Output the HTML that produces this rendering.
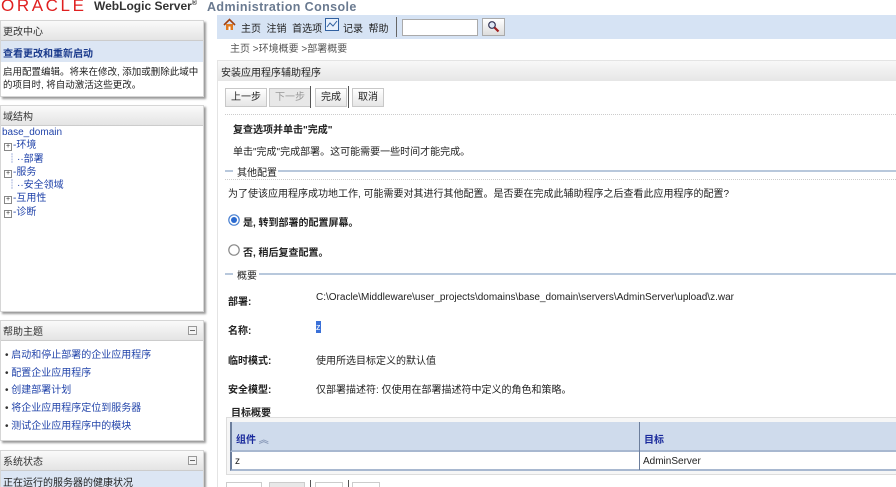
<!DOCTYPE html>
<html><head><meta charset="utf-8"><style>
*{margin:0;padding:0;box-sizing:border-box}
html,body{width:896px;height:487px;overflow:hidden}
body{background:#fff;font-family:"Liberation Sans","Noto Sans CJK SC",sans-serif;font-size:10px;color:#222;position:relative}
.a{position:absolute;white-space:nowrap}
.panel{position:absolute;left:0;width:204px;background:#fff;border:1px solid #d6d6d6;box-shadow:2px 2px 2px #999;overflow:hidden}
.ph{height:20px;background:linear-gradient(#fafafa,#e4e4e4);border-bottom:1px solid #ccc;padding:2px 2px;font-size:10px;color:#333;position:relative}
.mini{position:absolute;right:6px;top:5px;width:9px;height:9px;border:1px solid #999;background:#f4f4f4}
.mini:after{content:"";position:absolute;left:1px;right:1px;top:3px;height:1px;background:#666}
.tree div{height:13.3px;line-height:13px;color:#2244aa}
.plus{display:inline-block;width:8px;height:8px;border:1px solid #888;font-size:7px;line-height:6px;text-align:center;color:#333;margin-right:1px;vertical-align:0}
.btn{position:absolute;top:88px;height:19px;border:1px solid #c8c8c8;background:linear-gradient(#fff,#e6e6e6);font-size:10px;line-height:17px;padding:0 5px;color:#222}
.sep{position:absolute;top:86px;width:1px;height:22px;background:#555}
.hr{position:absolute;height:2px;background:#b8c8dc}
.dot{position:absolute;height:1px;border-top:1px dotted #ccc}
</style></head><body>
<div class="a" style="left:1px;top:-4px;font-size:17px;color:#e02020;letter-spacing:2.6px">ORACLE</div>
<div class="a" style="left:94px;top:-1px;font-size:12px;font-weight:bold;color:#333">WebLogic Server<sup style="font-size:7px">®</sup></div>
<div class="a" style="left:207px;top:0px;font-size:12.5px;color:#6a7a90;font-weight:bold;letter-spacing:.4px">Administration Console</div>

<div class="panel" style="top:20px;height:77px">
 <div class="ph">更改中心</div>
 <div style="background:#dce6f4;height:21px;padding:4px 2px;color:#1a3a8c;font-weight:bold">查看更改和重新启动</div>
 <div style="padding:4px 2px;line-height:13px;font-size:9.5px">启用配置编辑。将来在修改, 添加或删除此域中<br>的项目时, 将自动激活这些更改。</div>
</div>
<div class="panel" style="top:105px;height:207px">
 <div class="ph">域结构</div>
 <div class="tree" style="padding:0 0 0 1px">
  <div>base_domain</div>
  <div style="padding-left:2px"><span class="plus">+</span>-环境</div>
  <div style="padding-left:5px">┊··部署</div>
  <div style="padding-left:2px"><span class="plus">+</span>-服务</div>
  <div style="padding-left:5px">┊··安全领域</div>
  <div style="padding-left:2px"><span class="plus">+</span>-互用性</div>
  <div style="padding-left:2px"><span class="plus">+</span>-诊断</div>
 </div>
</div>
<div class="panel" style="top:320px;height:121px">
 <div class="ph">帮助主题<span class="mini"></span></div>
 <div style="padding:6px 0 0 4px;line-height:17.7px;color:#2244aa">
  <div><span style="color:#333">•</span> 启动和停止部署的企业应用程序</div>
  <div><span style="color:#333">•</span> 配置企业应用程序</div>
  <div><span style="color:#333">•</span> 创建部署计划</div>
  <div><span style="color:#333">•</span> 将企业应用程序定位到服务器</div>
  <div><span style="color:#333">•</span> 测试企业应用程序中的模块</div>
 </div>
</div>
<div class="panel" style="top:450px;height:45px">
 <div class="ph">系统状态<span class="mini"></span></div>
 <div style="background:#dce6f4;height:20px;padding:3px 2px;color:#222">正在运行的服务器的健康状况</div>
</div>

<div class="a" style="left:217px;top:15px;width:679px;height:24px;background:#d6e3f4"></div>
<svg class="a" style="left:223px;top:18px" width="13" height="13" viewBox="0 0 13 13"><path d="M1 7L6.5 1.5 12 7" fill="none" stroke="#a04010" stroke-width="1.6"/><rect x="3" y="6" width="7" height="6" fill="#e07a20"/><rect x="5.5" y="8.5" width="2" height="3.5" fill="#fff"/></svg>
<div class="a" style="left:241px;top:20px">主页&nbsp;&nbsp;注销&nbsp;&nbsp;首选项</div>
<svg class="a" style="left:325px;top:18px" width="14" height="13"><rect x=".5" y=".5" width="13" height="12" fill="#e8f0fb" stroke="#3060a0"/><path d="M2 9l3-4 3 3 4-5" fill="none" stroke="#3060a0"/></svg>
<div class="a" style="left:343px;top:20px">记录&nbsp;&nbsp;帮助</div>
<div class="a" style="left:396px;top:17px;width:1px;height:20px;background:#666"></div>
<div class="a" style="left:402px;top:19px;width:76px;height:17px;background:#fff;border:1px solid #aaa"></div>
<div class="a" style="left:482px;top:18px;width:23px;height:18px;border:1px solid #aaa;background:linear-gradient(#fff,#ddd)"></div>
<svg class="a" style="left:487px;top:20px" width="13" height="13"><circle cx="5" cy="5" r="3.3" fill="#dfe8f5" stroke="#335" stroke-width="1.2"/><path d="M7.5 7.5L11.5 11.5" stroke="#a02020" stroke-width="2.2"/></svg>
<div class="a" style="left:230px;top:40px;color:#555">主页 &gt;环境概要 &gt;部署概要</div>

<div class="a" style="left:217px;top:60px;width:679px;height:427px;border-left:1px solid #e4e4e4;border-top:1px solid #e4e4e4"></div>
<div class="a" style="left:218px;top:61px;width:678px;height:20px;background:linear-gradient(#f8f8f8,#e6e6e6);padding:3px 3px;color:#222">安装应用程序辅助程序</div>
<div class="btn" style="left:225px">上一步</div>
<div class="btn" style="left:269px;color:#999;background:#e8e8e8">下一步</div>
<div class="sep" style="left:310px"></div>
<div class="btn" style="left:315px">完成</div>
<div class="sep" style="left:348px"></div>
<div class="btn" style="left:352px">取消</div>
<div class="dot" style="left:225px;top:114px;width:671px"></div>
<div class="a" style="left:233px;top:121px;font-weight:bold">复查选项并单击"完成"</div>
<div class="a" style="left:233px;top:143px">单击"完成"完成部署。这可能需要一些时间才能完成。</div>
<div class="hr" style="left:225px;top:170px;width:8px"></div>
<div class="a" style="left:237px;top:164px">其他配置</div>
<div class="hr" style="left:278px;top:170px;width:618px"></div>
<div class="dot" style="left:225px;top:179px;width:671px"></div>
<div class="a" style="left:228px;top:185px">为了使该应用程序成功地工作, 可能需要对其进行其他配置。是否要在完成此辅助程序之后查看此应用程序的配置?</div>
<svg class="a" style="left:228px;top:214px" width="12" height="12"><circle cx="6" cy="6" r="5.2" fill="#fff" stroke="#4a80d0" stroke-width="1.2"/><circle cx="6" cy="6" r="3" fill="#2a6ad0"/></svg>
<div class="a" style="left:243px;top:214px;font-weight:bold">是, 转到部署的配置屏幕。</div>
<svg class="a" style="left:228px;top:244px" width="12" height="12"><circle cx="6" cy="6" r="5.2" fill="#fff" stroke="#888" stroke-width="1.2"/></svg>
<div class="a" style="left:243px;top:244px;font-weight:bold">否, 稍后复查配置。</div>
<div class="hr" style="left:225px;top:273px;width:8px"></div>
<div class="a" style="left:237px;top:267px">概要</div>
<div class="hr" style="left:259px;top:273px;width:637px"></div>
<div class="a" style="left:228px;top:293px;font-weight:bold">部署:</div>
<div class="a" style="left:316px;top:292px">C:\Oracle\Middleware\user_projects\domains\base_domain\servers\AdminServer\upload\z.war</div>
<div class="a" style="left:228px;top:322px;font-weight:bold">名称:</div>
<div class="a" style="left:316px;top:321px;background:#3a70d8;color:#fff;width:5px;height:12px;font-size:9px;line-height:12px">z</div>
<div class="a" style="left:228px;top:352px;font-weight:bold">临时模式:</div>
<div class="a" style="left:316px;top:352px">使用所选目标定义的默认值</div>
<div class="a" style="left:228px;top:381px;font-weight:bold">安全模型:</div>
<div class="a" style="left:316px;top:381px">仅部署描述符: 仅使用在部署描述符中定义的角色和策略。</div>
<div class="a" style="left:231px;top:404px;font-weight:bold">目标概要</div>
<div class="a" style="left:226px;top:417px;width:670px;height:58px;border:1px solid #ddd;border-right:none;background:#f6f6f6"></div>
<div class="a" style="left:230px;top:422px;width:666px;height:30px;background:#cfdbec;border-left:2px solid #6c7e9c;border-bottom:2px solid #a8b8d0"></div>
<div class="a" style="left:236px;top:431px;color:#1a2a9c;font-weight:bold">组件 <span style="color:#8898b8">︽</span></div>
<div class="a" style="left:639px;top:422px;width:1px;height:48px;background:#6c7e9c"></div>
<div class="a" style="left:644px;top:431px;color:#1a2a9c;font-weight:bold">目标</div>
<div class="a" style="left:230px;top:452px;width:666px;height:19px;background:#fff;border-left:2px solid #6c7e9c;border-bottom:2px solid #a8b8d0"></div>
<div class="a" style="left:235px;top:456px">z</div>
<div class="a" style="left:643px;top:456px">AdminServer</div>
<div class="a" style="left:639px;top:452px;width:1px;height:18px;background:#6c7e9c"></div>
<div class="a" style="left:226px;top:482px;width:36px;height:8px;border:1px solid #ccc"></div>
<div class="a" style="left:269px;top:482px;width:36px;height:8px;border:1px solid #ccc;background:#e8e8e8"></div>
<div class="a" style="left:310px;top:480px;width:1px;height:8px;background:#555"></div>
<div class="a" style="left:315px;top:482px;width:28px;height:8px;border:1px solid #ccc"></div>
<div class="a" style="left:348px;top:480px;width:1px;height:8px;background:#555"></div>
<div class="a" style="left:352px;top:482px;width:28px;height:8px;border:1px solid #ccc"></div>
</body></html>
